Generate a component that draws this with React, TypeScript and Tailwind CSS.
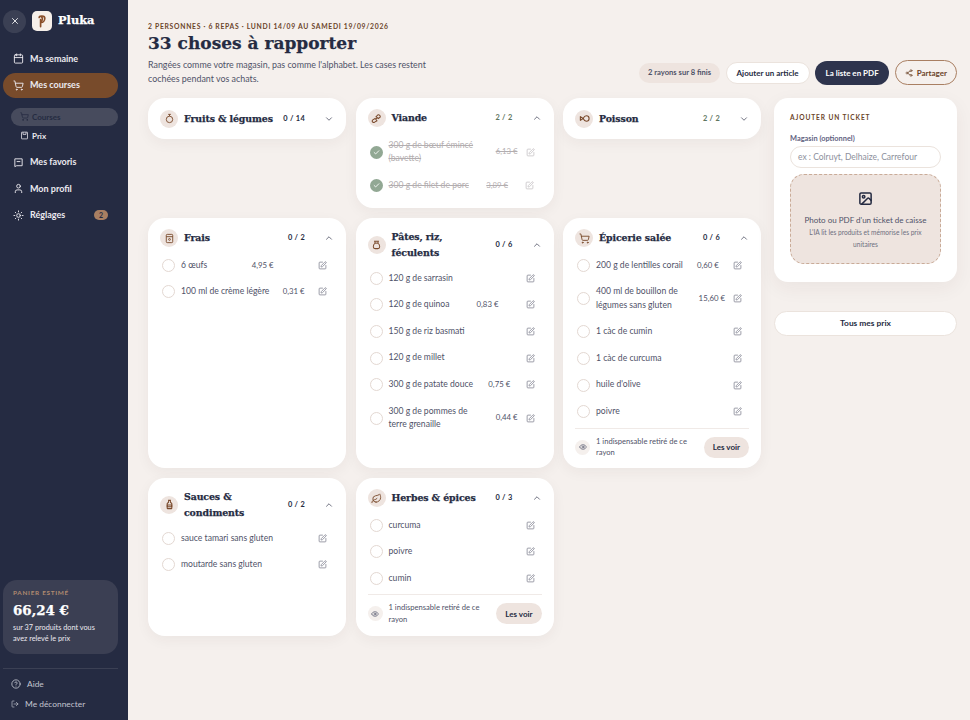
import React from "react";
import {
	Calendar, Check, ChevronDown, ChevronUp, CircleHelp, Eye, Image, Leaf, LogOut,
	Share2, ShoppingCart, SquarePen, Sun, User, X,
} from "lucide-react";

type Item = { name: string, price?: string, done?: boolean };
type Rayon = { title: string, count: string, icon: React.ReactNode, items?: Item[], hidden?: boolean, green?: boolean };

const bodyFont = "font-['Lato','Noto_Sans',sans-serif]";
const titleFont = "font-['DejaVu_Serif',serif] font-bold [-webkit-text-stroke:0.25px_currentColor]";

function AppleIcon() {
	return (
		<svg viewBox="0 0 24 24" className="w-[11px] h-[11px]" fill="none" stroke="currentColor" strokeWidth="2">
			<circle cx="12" cy="14" r="7" />
			<path d="M12 7V3M9 3h6" />
		</svg>
	);
}

function LinkIcon() {
	return (
		<svg viewBox="0 0 24 24" className="w-[11px] h-[11px]" fill="none" stroke="currentColor" strokeWidth="2.2">
			<path d="M15 4a4 4 0 0 1 5 5l-4 3-5-4zM9 12l-5 3a3 3 0 0 0 4 5l5-3zM10 14l4-4" />
		</svg>
	);
}

function FishIcon() {
	return (
		<svg viewBox="0 0 24 24" className="w-[11px] h-[11px]" fill="none" stroke="currentColor" strokeWidth="2.4" strokeLinejoin="round">
			<path d="M9 12c2-4 4-6 7-6a6 6 0 0 1 0 12c-3 0-5-2-7-6z" />
			<path d="M9 12 3 8v8z" />
		</svg>
	);
}

function CartonIcon() {
	return (
		<svg viewBox="0 0 24 24" className="w-[11px] h-[11px]" fill="none" stroke="currentColor" strokeWidth="2">
			<rect x="5" y="3" width="14" height="18" rx="2" />
			<path d="M5 8h14" />
			<circle cx="12" cy="14" r="2" />
		</svg>
	);
}

function BagIcon() {
	return (
		<svg viewBox="0 0 24 24" className="w-[11px] h-[11px]" fill="none" stroke="currentColor" strokeWidth="2.2">
			<path d="M8 5h8l-1 4c3 2 4 5 4 8a4 4 0 0 1-4 4H9a4 4 0 0 1-4-4c0-3 1-6 4-8z" />
			<path d="M9 9h6" />
		</svg>
	);
}

function BottleIcon() {
	return (
		<svg viewBox="0 0 24 24" className="w-[11px] h-[11px]" fill="none" stroke="currentColor" strokeWidth="2.2">
			<path d="M10 3h4v4l3 3v10a1 1 0 0 1-1 1H8a1 1 0 0 1-1-1V10l3-3z" />
			<path d="M7 13h10v4H7z" />
		</svg>
	);
}

function FavIcon() {
	return (
		<svg viewBox="0 0 24 24" className="w-[11px] h-[11px]" fill="none" stroke="currentColor" strokeWidth="2">
			<path d="M4 4h16v15H8l-4 2z" />
			<path d="M8 10h8" />
		</svg>
	);
}

function PrixIcon() {
	return (
		<svg viewBox="0 0 24 24" className="w-[9px] h-[9px]" fill="none" stroke="currentColor" strokeWidth="2">
			<rect x="4" y="3" width="16" height="18" rx="1" />
			<path d="M8 3v6h8V3" />
		</svg>
	);
}

const column1: Rayon[] = [
	{ title: "Fruits & légumes", count: "0 / 14", icon: <AppleIcon /> },
	{ title: "Frais", count: "0 / 2", icon: <CartonIcon />, items: [
		{ name: "6 œufs", price: "4,95 €" },
		{ name: "100 ml de crème légère", price: "0,31 €" },
	] },
	{ title: "Sauces & condiments", count: "0 / 2", icon: <BottleIcon />, items: [
		{ name: "sauce tamari sans gluten" },
		{ name: "moutarde sans gluten" },
	] },
];

const column2: Rayon[] = [
	{ title: "Viande", count: "2 / 2", green: true, icon: <LinkIcon />, items: [
		{ name: "300 g de bœuf émincé (bavette)", price: "6,13 €", done: true },
		{ name: "300 g de filet de porc", price: "3,89 €", done: true },
	] },
	{ title: "Pâtes, riz, féculents", count: "0 / 6", icon: <BagIcon />, items: [
		{ name: "120 g de sarrasin" },
		{ name: "120 g de quinoa", price: "0,83 €" },
		{ name: "150 g de riz basmati" },
		{ name: "120 g de millet" },
		{ name: "300 g de patate douce", price: "0,75 €" },
		{ name: "300 g de pommes de terre grenaille", price: "0,44 €" },
	] },
	{ title: "Herbes & épices", count: "0 / 3", hidden: true, icon: <Leaf className="w-[11px] h-[11px]" />, items: [
		{ name: "curcuma" },
		{ name: "poivre" },
		{ name: "cumin" },
	] },
];

const column3: Rayon[] = [
	{ title: "Poisson", count: "2 / 2", green: true, icon: <FishIcon /> },
	{ title: "Épicerie salée", count: "0 / 6", hidden: true, icon: <ShoppingCart className="w-[11px] h-[11px]" />, items: [
		{ name: "200 g de lentilles corail", price: "0,60 €" },
		{ name: "400 ml de bouillon de légumes sans gluten", price: "15,60 €" },
		{ name: "1 càc de cumin" },
		{ name: "1 càc de curcuma" },
		{ name: "huile d'olive" },
		{ name: "poivre" },
	] },
];

function RayonRow(props: { item: Item }) {
	const item = props.item;
	const textColor = item.done ? "text-[#b3aeb0] line-through" : "text-[#4f5268]";

	return (
		<div className="flex flex-row items-center py-[6.6px] text-[8.6px] leading-[13.4px]">
			{item.done ? (
				<span className="w-[13px] h-[13px] rounded-full bg-[#92a894] flex items-center justify-center shrink-0 mr-[6px]">
					<Check className="w-[7px] h-[7px] text-white" strokeWidth={3} />
				</span>
			) : (
				<span className="w-[13px] h-[13px] rounded-full border border-[#e3d8d2] shrink-0 mr-[6px]" />
			)}
			<div className="flex flex-row flex-1 items-center justify-between gap-2 min-w-0">
				<span className={textColor}>{item.name}</span>
				{item.price && <span className={`${textColor} text-[7.8px] whitespace-nowrap`}>{item.price}</span>}
				<SquarePen className={`w-[9px] h-[9px] shrink-0 ${item.done ? "text-[#c3bfc2]" : "text-[#7c7e8c]"}`} />
			</div>
		</div>
	);
}

function RayonCard(props: { rayon: Rayon }) {
	const rayon = props.rayon;
	const collapsed = !rayon.items;

	return (
		<section className={`bg-white rounded-[17px] shadow-[0_4px_14px_rgba(60,40,30,0.05)] px-[12px] flex flex-col ${collapsed ? "self-start w-full h-[41px] justify-center" : "pt-[8px] pb-[10px]"}`}>
			<div className="flex flex-row items-center min-h-[24px]">
				<span className="w-[18px] h-[18px] rounded-full bg-[#eee4df] text-[#7a4a2c] flex items-center justify-center shrink-0">
					{rayon.icon}
				</span>
				<h2 className={`${titleFont} ml-[6px] flex-1 py-[3px] text-[#252b42] text-[9.4px] leading-[15.5px] tracking-[-0.1px]`}>{rayon.title}</h2>
				<span className={`text-[7.4px] font-bold tracking-[0.3px] whitespace-nowrap ml-1 ${rayon.green ? "text-[#5e7560]" : "text-[#252b42]"}`}>{rayon.count}</span>
				<span className="w-[29px] flex justify-end shrink-0">
					{collapsed ? <ChevronDown className="w-[10px] h-[10px] text-[#55586a]" /> : <ChevronUp className="w-[10px] h-[10px] text-[#55586a]" />}
				</span>
			</div>
			{rayon.items && (
				<div className="flex flex-col mt-[2.1px] pl-[2px] pr-[7px]">
					{rayon.items.map(i => <RayonRow key={i.name} item={i} />)}
				</div>
			)}
			{rayon.hidden && (
				<div className="flex flex-row items-center border-t border-[#f0eae7] mt-[2.5px] pt-[7px]">
					<span className="w-[15px] h-[15px] rounded-full bg-[#f5f0ed] flex items-center justify-center shrink-0 mr-[6px]">
						<Eye className="w-[8px] h-[8px] text-[#4f5268]" />
					</span>
					<span className="text-[7.6px] leading-[11.5px] text-[#4f5268] flex-1">1 indispensable retiré de ce rayon</span>
					<button className="h-[21px] px-[9px] ml-1 rounded-full bg-[#eee4df] text-[#252b42] text-[8px] font-bold whitespace-nowrap">Les voir</button>
				</div>
			)}
		</section>
	);
}

function NavItem(props: { icon: React.ReactNode, label: string, active?: boolean, badge?: string }) {
	return (
		<div className={`flex flex-row items-center h-[25px] pl-[10px] pr-[10px] rounded-full text-[9px] font-bold ${props.active ? "bg-[#784b2b]" : ""} text-[#eceaf0]`}>
			<span className="w-[11px] flex justify-center mr-[6px]">{props.icon}</span>
			<span className="flex-1">{props.label}</span>
			{props.badge && <span className="bg-[#a97f62] text-[#252b42] rounded-full text-[7px] w-[14px] h-[10px] flex items-center justify-center">{props.badge}</span>}
		</div>
	);
}

function Sidebar() {
	const ic = "w-[11px] h-[11px]";
	return (
		<aside className="w-[128px] h-[720px] shrink-0 bg-[#252b42] flex flex-col pl-[3px] pr-[10px]">
			<div className="flex flex-row items-center h-[42px]">
				<span className="w-[23px] h-[23px] rounded-full bg-[#3b4054] flex items-center justify-center text-white">
					<X className="w-[10px] h-[10px]" />
				</span>
				<span className="ml-[6px] w-[20px] h-[20px] rounded-[5px] bg-[#f6efe9] flex items-center justify-center">
					<svg viewBox="0 0 20 20" className="w-[14px] h-[16px]" fill="none" stroke="#8a4f2a" strokeWidth="2.4" strokeLinecap="round">
						<path d="M8 18V8M6 5c0-3 8-3 8 1s-3 6-5 6" />
						<path d="M9 4c2 1 2 4 0 7" />
					</svg>
				</span>
				<span className={`${titleFont} ml-[6px] text-white text-[11.4px]`}>Pluka</span>
			</div>
			<div className="flex flex-col mt-[4px] gap-[1.5px]">
				<NavItem icon={<Calendar className={ic} />} label="Ma semaine" />
				<NavItem icon={<ShoppingCart className={ic} />} label="Mes courses" active />
			</div>
			<div className="flex flex-col ml-[8px] mt-[10px]">
				<div className="flex flex-row items-center h-[18px] pl-[9px] rounded-full bg-[#474b5d] text-[#252b42] text-[8px] font-bold">
					<ShoppingCart className="w-[9px] h-[9px] mr-[3px]" />
					Courses
				</div>
				<div className="flex flex-row items-center h-[20px] pl-[9px] text-[#eceaf0] text-[8px] font-bold">
					<span className="mr-[3px] flex"><PrixIcon /></span>
					Prix
				</div>
			</div>
			<div className="flex flex-col mt-[4px] gap-[1.5px]">
				<NavItem icon={<FavIcon />} label="Mes favoris" />
				<NavItem icon={<User className={ic} />} label="Mon profil" />
				<NavItem icon={<Sun className={ic} />} label="Réglages" badge="2" />
			</div>
			<div className="mt-auto rounded-[14px] bg-[#3b3f53] h-[74px] px-[10px] pt-[8px]">
				<div className="text-[6.4px] font-bold tracking-[0.7px] text-[#b08a70]">PANIER ESTIMÉ</div>
				<div className={`${titleFont} text-white text-[13.4px] leading-[20px] mt-[2px]`}>66,24 €</div>
				<div className="text-[7.3px] leading-[11px] text-[#eceaf0] mt-[2px]">sur 37 produits dont vous avez relevé le prix</div>
			</div>
			<div className="mt-[14px] border-t border-[#3b4054] pt-[5px] pb-[6px] flex flex-col">
				<div className="flex flex-row items-center h-[20px] pl-[8px] text-[#c3c5cf] text-[8.4px]">
					<CircleHelp className="w-[10px] h-[10px] mr-[6px]" />Aide
				</div>
				<div className="flex flex-row items-center h-[20px] pl-[8px] text-[#c3c5cf] text-[8.4px]">
					<LogOut className="w-[8px] h-[8px] mr-[6px]" />Me déconnecter
				</div>
			</div>
		</aside>
	);
}

function TicketPanel() {
	return (
		<div className="flex flex-col w-[183px] shrink-0 gap-[29px]">
			<div className="bg-white rounded-[14px] shadow-[0_6px_20px_rgba(60,40,30,0.06)] px-[16px] pt-[15px] h-[184px]">
				<div className="text-[6.6px] font-bold tracking-[0.9px] text-[#6b4429] leading-[9px]">AJOUTER UN TICKET</div>
				<div className="text-[7.4px] font-bold text-[#5f6280] mt-[11px] leading-[11px]">Magasin (optionnel)</div>
				<div className="h-[22px] mt-[2px] rounded-full border border-[#ebe3dd] pl-[7px] flex items-center text-[8.5px] text-[#8d8f9c]">ex : Colruyt, Delhaize, Carrefour</div>
				<div className="mt-[5.5px] h-[90.5px] rounded-[14px] bg-[#eee4df] border border-dashed border-[#c9ab98] flex flex-col items-center px-[10px] pt-[16px]">
					<Image className="w-[15px] h-[15px] text-[#252b42]" strokeWidth={2.4} />
					<div className="text-[8px] text-[#4f5268] mt-[8px] whitespace-nowrap">Photo ou PDF d'un ticket de caisse</div>
					<div className="text-[6.6px] leading-[12px] text-[#6d6f80] text-center">L'IA lit les produits et mémorise les prix unitaires</div>
				</div>
			</div>
			<button className="h-[25px] rounded-full bg-white border border-[#ebe3dd] text-[#252b42] text-[8.4px] font-bold">Tous mes prix</button>
		</div>
	);
}

export default function App() {
	const columns = [column1, column2, column3];

	return (
		<div className={`${bodyFont} flex flex-row w-[970px] h-[720px] overflow-hidden bg-[#f5f0ed]`}>
			<Sidebar />
			<main className="flex-1 pl-[20px] pr-[13px] flex flex-col">
				<header className="flex flex-row items-end justify-between h-[98px] pb-[13px]">
					<div className="w-[290px] pt-[21px] self-start">
						<div className="text-[6.8px] font-bold tracking-[0.7px] text-[#6b4429] uppercase leading-[10px] whitespace-nowrap">2 personnes · 6 repas · lundi 14/09 au samedi 19/09/2026</div>
						<h1 className={`${titleFont} text-[#252b42] text-[17px] leading-[24px]`}>33 choses à rapporter</h1>
						<p className="text-[8.9px] leading-[14px] text-[#4f5268] mt-[3px]">Rangées comme votre magasin, pas comme l'alphabet. Les cases restent cochées pendant vos achats.</p>
					</div>
					<div className="flex flex-row items-center gap-[5.5px]">
						<span className="h-[20px] px-[9px] rounded-full bg-[#eee4df] text-[#4f5268] text-[7.6px] font-bold flex items-center">2 rayons sur 8 finis</span>
						<button className="h-[22px] px-[10px] rounded-full bg-white border border-[#ebe3dd] text-[#252b42] text-[8px] font-bold">Ajouter un article</button>
						<button className="h-[24px] px-[10.5px] rounded-full bg-[#2e344d] text-white text-[8px] font-bold">La liste en PDF</button>
						<button className="h-[25px] px-[9px] rounded-full border border-[#a97f62] text-[#6b4429] text-[8px] font-bold flex items-center">
							<Share2 className="w-[8px] h-[8px] mr-[4px]" />Partager
						</button>
					</div>
				</header>
				<div className="flex flex-row items-start gap-[13px]">
					<div className="grid grid-cols-3 gap-x-[9.5px] gap-y-[10px] w-[613px] shrink-0 grid-rows-[110px_250px_158px]">
						{[0, 1, 2].map(r => columns.map((c, ci) => {
							const rayon = c[r];
							if (!rayon) return <div key={`${r}-${ci}`} />;
							return <RayonCard key={rayon.title} rayon={rayon} />;
						}))}
					</div>
					<TicketPanel />
				</div>
			</main>
		</div>
	);
}
